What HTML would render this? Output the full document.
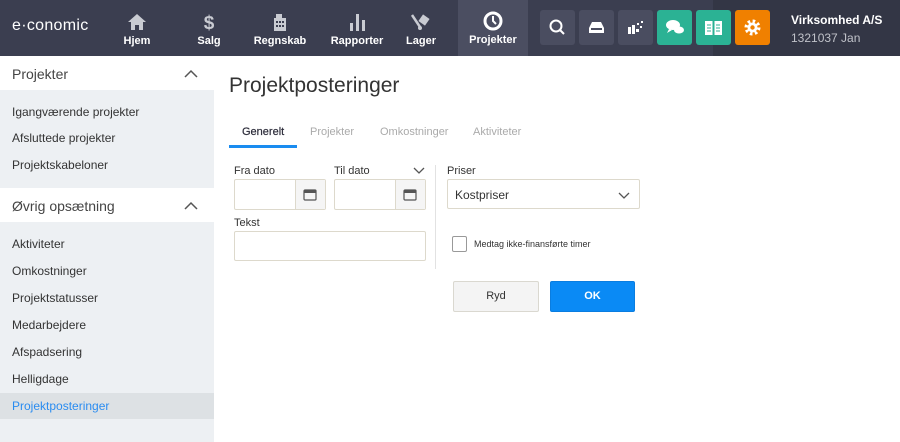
<!DOCTYPE html>
<html><head><meta charset="utf-8"><style>
*{box-sizing:border-box;margin:0;padding:0}
body{width:900px;height:442px;overflow:hidden;font-family:"Liberation Sans",sans-serif;background:#fff;position:relative;color:#333}
.a{position:absolute}
#hdr{left:0;top:0;width:900px;height:56px;background:#3b3e50}
.nav{top:0;height:56px;width:68px;text-align:center;color:#fff;font-size:11px;font-weight:bold}
.nav svg{display:block;margin:13px auto 4px}
.ib{top:10px;width:35px;height:35px;border-radius:3px;background:#4a4d60}
.sb{left:0;top:56px;width:214px;height:386px;background:#edf0f3}
.sh{left:0;width:214px;height:34px;background:#fff;font-size:14px;color:#444;padding:10px 12px}
.si{left:12px;font-size:12px;color:#333}
.lbl{font-size:11px;color:#333}
.inp{border:1px solid #ddd9cc;background:#fff;border-radius:2px}
.tab{top:126px;font-size:11px;color:#aaa}
</style></head><body>
<div class="a" id="hdr"></div>
<div class="a" style="left:12px;top:17px;color:#fff;font-size:16px;letter-spacing:.3px">e·conomic</div>
<div class="a" style="left:458px;top:0;width:70px;height:56px;background:#4b4e61"></div>
<div class="a" style="left:713px;top:0;width:187px;height:56px;background:#333645"></div>
<div class="a nav" style="left:103px"><svg width="20" height="18" viewBox="0 0 20 18"><path d="M10 1L1 9h3v8h4v-5h4v5h4V9h3z" fill="#c9cbd2"/></svg>Hjem</div>
<div class="a nav" style="left:175px"><svg width="20" height="18"><text x="10" y="16" text-anchor="middle" font-size="19" font-weight="bold" fill="#c9cbd2" font-family="Liberation Sans">$</text></svg>Salg</div>
<div class="a nav" style="left:246px"><svg width="16" height="18" viewBox="0 0 16 18"><rect x="4" y="1" width="6" height="4" fill="#c9cbd2"/><rect x="2" y="5" width="12" height="13" fill="#c9cbd2"/><g fill="#3b3e50"><rect x="4" y="8" width="2" height="2"/><rect x="7" y="8" width="2" height="2"/><rect x="10" y="8" width="2" height="2"/><rect x="4" y="12" width="2" height="2"/><rect x="7" y="12" width="2" height="2"/><rect x="10" y="12" width="2" height="2"/></g></svg>Regnskab</div>
<div class="a nav" style="left:323px"><svg width="20" height="18"><rect x="3" y="10" width="3" height="8" fill="#c9cbd2"/><rect x="9" y="1" width="3" height="17" fill="#c9cbd2"/><rect x="15" y="7" width="3" height="11" fill="#c9cbd2"/></svg>Rapporter</div>
<div class="a nav" style="left:387px"><svg width="22" height="18" viewBox="0 0 22 18"><path d="M2 2l8 12" stroke="#c9cbd2" stroke-width="2.5"/><rect x="10" y="3" width="8" height="8" transform="rotate(35 14 7)" fill="#c9cbd2"/><circle cx="10" cy="15" r="2" fill="#c9cbd2"/></svg>Lager</div>
<div class="a nav" style="left:459px"><svg width="22" height="20" viewBox="0 0 22 20" style="margin-top:11px;margin-bottom:3px"><circle cx="11" cy="10" r="8" fill="none" stroke="#fff" stroke-width="3"/><path d="M11 5v5l3 3" stroke="#fff" stroke-width="2" fill="none"/></svg>Projekter</div>
<div class="a ib" style="left:540px"><svg width="35" height="35"><circle cx="16" cy="16" r="5.5" stroke="#fff" stroke-width="2" fill="none"/><path d="M20 20l4 4" stroke="#fff" stroke-width="2"/></svg></div>
<div class="a ib" style="left:579px"><svg width="35" height="35"><path d="M10 18l3-6h9l3 6v5H10z" fill="#fff"/><rect x="12" y="18" width="11" height="2" fill="#4a4d60"/></svg></div>
<div class="a ib" style="left:618px"><svg width="35" height="35" fill="#fff"><rect x="10" y="17" width="3" height="7"/><rect x="14" y="15" width="3" height="9"/><rect x="18" y="19" width="3" height="3"/><rect x="19" y="13" width="2" height="2"/><rect x="22" y="16" width="2" height="2"/><rect x="23" y="11" width="2" height="2"/></svg></div>
<div class="a ib" style="left:657px;background:#2bb294"><svg width="35" height="35" fill="#fff"><ellipse cx="16" cy="15" rx="7" ry="5"/><path d="M12 19l-2 4 5-3z"/><ellipse cx="22" cy="20" rx="5" ry="3.5"/></svg></div>
<div class="a ib" style="left:696px;background:#2bb294"><svg width="35" height="35" fill="#fff"><path d="M9 11h7.5v14H9zM18.5 11H26v14h-7.5z"/><g stroke="#2bb294" stroke-width="1"><path d="M11 15h4M11 18h4M11 21h4M20 15h4M20 18h4M20 21h4"/></g></svg></div>
<div class="a ib" style="left:735px;background:#f08000"><svg width="35" height="35"><circle cx="17.5" cy="17.5" r="6" fill="none" stroke="#fff" stroke-width="4" stroke-dasharray="2.4 2.3"/><circle cx="17.5" cy="17.5" r="5" fill="#fff"/><circle cx="17.5" cy="17.5" r="2.2" fill="#f08000"/></svg></div>
<div class="a" style="left:791px;top:13px;color:#fff;font-size:12px;font-weight:bold">Virksomhed A/S</div>
<div class="a" style="left:791px;top:31px;color:#c0c2c9;font-size:12px">1321037 Jan</div>

<div class="a sb"></div>
<div class="a sh" style="top:56px">Projekter<svg class="a" style="left:184px;top:13px" width="14" height="9"><path d="M1 8l6-6 6 6" stroke="#555" stroke-width="1.5" fill="none"/></svg></div>
<div class="a si" style="top:105px">Igangværende projekter</div>
<div class="a si" style="top:131px">Afsluttede projekter</div>
<div class="a si" style="top:158px">Projektskabeloner</div>
<div class="a sh" style="top:188px">Øvrig opsætning<svg class="a" style="left:184px;top:13px" width="14" height="9"><path d="M1 8l6-6 6 6" stroke="#555" stroke-width="1.5" fill="none"/></svg></div>
<div class="a si" style="top:237px">Aktiviteter</div>
<div class="a si" style="top:264px">Omkostninger</div>
<div class="a si" style="top:291px">Projektstatusser</div>
<div class="a si" style="top:318px">Medarbejdere</div>
<div class="a si" style="top:345px">Afspadsering</div>
<div class="a si" style="top:372px">Helligdage</div>
<div class="a" style="left:0;top:393px;width:214px;height:26px;background:#dde1e4"></div>
<div class="a si" style="top:399px;color:#2a8cf0">Projektposteringer</div>

<div class="a" style="left:229px;top:74px;font-size:21px;color:#333">Projektposteringer</div>
<div class="a tab" style="left:242px;color:#2c2c3a;-webkit-text-stroke:0.2px #2c2c3a">Generelt</div>
<div class="a" style="left:229px;top:145px;width:68px;height:3px;background:#1a8cf0"></div>
<div class="a tab" style="left:310px">Projekter</div>
<div class="a tab" style="left:380px">Omkostninger</div>
<div class="a tab" style="left:473px">Aktiviteter</div>

<div class="a lbl" style="left:234px;top:165px">Fra dato</div>
<div class="a lbl" style="left:334px;top:165px">Til dato</div>
<svg class="a" style="left:413px;top:167px" width="12" height="8"><path d="M1 1l5 5 5-5" stroke="#555" stroke-width="1.3" fill="none"/></svg>
<div class="a inp" style="left:234px;top:179px;width:92px;height:31px"><div class="a" style="right:0;top:0;width:30px;height:29px;background:#f5f5f5;border-left:1px solid #ddd9cc"></div><svg class="a" style="right:8px;top:8px" width="14" height="13"><rect x="1" y="2" width="12" height="10" rx="1" fill="none" stroke="#555" stroke-width="1.2"/><rect x="1" y="2" width="12" height="3" fill="#555"/></svg></div>
<div class="a inp" style="left:334px;top:179px;width:92px;height:31px"><div class="a" style="right:0;top:0;width:30px;height:29px;background:#f5f5f5;border-left:1px solid #ddd9cc"></div><svg class="a" style="right:8px;top:8px" width="14" height="13"><rect x="1" y="2" width="12" height="10" rx="1" fill="none" stroke="#555" stroke-width="1.2"/><rect x="1" y="2" width="12" height="3" fill="#555"/></svg></div>
<div class="a lbl" style="left:234px;top:217px">Tekst</div>
<div class="a inp" style="left:234px;top:231px;width:192px;height:30px"></div>
<div class="a" style="left:435px;top:165px;width:1px;height:104px;background:#e2e2e2"></div>
<div class="a lbl" style="left:447px;top:165px">Priser</div>
<div class="a inp" style="left:447px;top:179px;width:193px;height:30px;font-size:12px;padding:8px 7px">Kostpriser<svg class="a" style="right:9px;top:12px" width="12" height="8"><path d="M1 1l5 5 5-5" stroke="#555" stroke-width="1.3" fill="none"/></svg></div>
<div class="a" style="left:452px;top:236px;width:15px;height:16px;border:1px solid #999;border-radius:2px"></div>
<div class="a" style="left:474px;top:239px;font-size:9px;color:#333">Medtag ikke-finansførte timer</div>
<div class="a" style="left:453px;top:281px;width:86px;height:31px;background:#f4f4f4;border:1px solid #dad8d0;border-radius:2px;font-size:11px;text-align:center;line-height:29px">Ryd</div>
<div class="a" style="left:550px;top:281px;width:85px;height:31px;background:#0a8af5;border:1px solid #0a7de0;border-radius:2px;font-size:11px;font-weight:bold;color:#fff;text-align:center;line-height:29px">OK</div>
</body></html>
